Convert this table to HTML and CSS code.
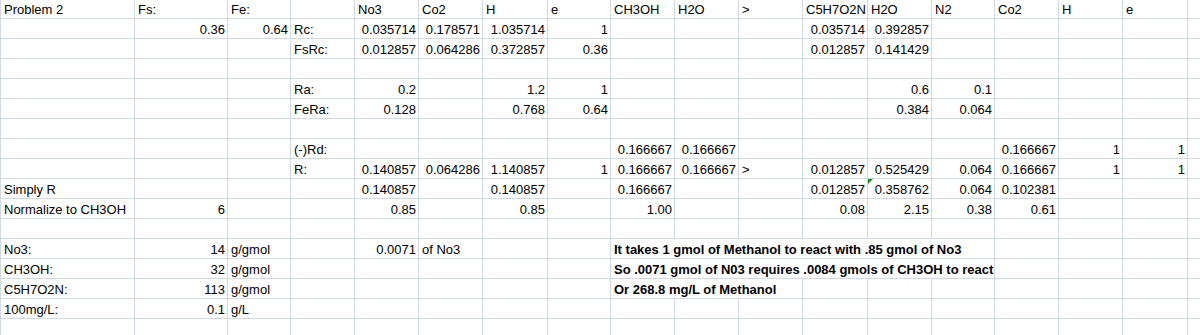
FILE: index.html
```html
<!DOCTYPE html>
<html>
<head>
<meta charset="utf-8">
<title>Problem 2</title>
<link rel="stylesheet" href="styles.css">
</head>
<body>
<div class="sheet">
  <div class="r first">
    <div>Problem 2</div><div>Fs:</div><div>Fe:</div><div></div><div>No3</div><div>Co2</div><div>H</div><div>e</div><div>CH3OH</div><div>H2O</div><div>&gt;</div><div>C5H7O2N</div><div>H2O</div><div>N2</div><div>Co2</div><div>H</div><div>e</div><div></div>
  </div>
  <div class="r">
    <div></div><div class="n">0.36</div><div class="n">0.64</div><div>Rc:</div><div class="n">0.035714</div><div class="n">0.178571</div><div class="n">1.035714</div><div class="n">1</div><div></div><div></div><div></div><div class="n">0.035714</div><div class="n">0.392857</div><div></div><div></div><div></div><div></div><div></div>
  </div>
  <div class="r">
    <div></div><div></div><div></div><div>FsRc:</div><div class="n">0.012857</div><div class="n">0.064286</div><div class="n">0.372857</div><div class="n">0.36</div><div></div><div></div><div></div><div class="n">0.012857</div><div class="n">0.141429</div><div></div><div></div><div></div><div></div><div></div>
  </div>
  <div class="r">
    <div></div><div></div><div></div><div></div><div></div><div></div><div></div><div></div><div></div><div></div><div></div><div></div><div></div><div></div><div></div><div></div><div></div><div></div>
  </div>
  <div class="r">
    <div></div><div></div><div></div><div>Ra:</div><div class="n">0.2</div><div></div><div class="n">1.2</div><div class="n">1</div><div></div><div></div><div></div><div></div><div class="n">0.6</div><div class="n">0.1</div><div></div><div></div><div></div><div></div>
  </div>
  <div class="r">
    <div></div><div></div><div></div><div>FeRa:</div><div class="n">0.128</div><div></div><div class="n">0.768</div><div class="n">0.64</div><div></div><div></div><div></div><div></div><div class="n">0.384</div><div class="n">0.064</div><div></div><div></div><div></div><div></div>
  </div>
  <div class="r">
    <div></div><div></div><div></div><div></div><div></div><div></div><div></div><div></div><div></div><div></div><div></div><div></div><div></div><div></div><div></div><div></div><div></div><div></div>
  </div>
  <div class="r">
    <div></div><div></div><div></div><div>(-)Rd:</div><div></div><div></div><div></div><div></div><div class="n">0.166667</div><div class="n">0.166667</div><div></div><div></div><div></div><div></div><div class="n">0.166667</div><div class="n">1</div><div class="n">1</div><div></div>
  </div>
  <div class="r">
    <div></div><div></div><div></div><div>R:</div><div class="n">0.140857</div><div class="n">0.064286</div><div class="n">1.140857</div><div class="n">1</div><div class="n">0.166667</div><div class="n">0.166667</div><div>&gt;</div><div class="n">0.012857</div><div class="n">0.525429</div><div class="n">0.064</div><div class="n">0.166667</div><div class="n">1</div><div class="n">1</div><div></div>
  </div>
  <div class="r">
    <div>Simply R</div><div></div><div></div><div></div><div class="n">0.140857</div><div></div><div class="n">0.140857</div><div></div><div class="n">0.166667</div><div></div><div></div><div class="n">0.012857</div><div class="n flag">0.358762</div><div class="n">0.064</div><div class="n">0.102381</div><div></div><div></div><div></div>
  </div>
  <div class="r">
    <div>Normalize to CH3OH</div><div class="n">6</div><div></div><div></div><div class="n">0.85</div><div></div><div class="n">0.85</div><div></div><div class="n">1.00</div><div></div><div></div><div class="n">0.08</div><div class="n">2.15</div><div class="n">0.38</div><div class="n">0.61</div><div></div><div></div><div></div>
  </div>
  <div class="r">
    <div></div><div></div><div></div><div></div><div></div><div></div><div></div><div></div><div></div><div></div><div></div><div></div><div></div><div></div><div></div><div></div><div></div><div></div>
  </div>
  <div class="r">
    <div>No3:</div><div class="n">14</div><div>g/gmol</div><div></div><div class="n">0.0071</div><div>of No3</div><div></div><div></div><div class="b span6">It takes 1 gmol of Methanol to react with .85 gmol of No3</div><div></div><div></div><div></div><div></div>
  </div>
  <div class="r">
    <div>CH3OH:</div><div class="n">32</div><div>g/gmol</div><div></div><div></div><div></div><div></div><div></div><div class="b span6">So .0071 gmol of N03 requires .0084 gmols of CH3OH to react</div><div></div><div></div><div></div><div></div>
  </div>
  <div class="r">
    <div>C5H7O2N:</div><div class="n">113</div><div>g/gmol</div><div></div><div></div><div></div><div></div><div></div><div class="b span3">Or 268.8 mg/L of Methanol</div><div></div><div></div><div></div><div></div><div></div><div></div><div></div>
  </div>
  <div class="r">
    <div>100mg/L:</div><div class="n">0.1</div><div>g/L</div><div></div><div></div><div></div><div></div><div></div><div></div><div></div><div></div><div></div><div></div><div></div><div></div><div></div><div></div><div></div>
  </div>
  <div class="r">
    <div></div><div></div><div></div><div></div><div></div><div></div><div></div><div></div><div></div><div></div><div></div><div></div><div></div><div></div><div></div><div></div><div></div><div></div>
  </div>
</div>
</body>
</html>
```

FILE: styles.css
```css
html, body {
  margin: 0;
  padding: 0;
  background: #ffffff;
}

body {
  font-family: "Liberation Sans", Arial, sans-serif;
  font-size: 13px;
  color: #000000;
  overflow: hidden;
}

.sheet {
  width: 1200px;
  height: 335px;
  overflow: hidden;
  border-left: 1px solid #d0d7e5;
  box-sizing: border-box;
}

.r {
  display: grid;
  grid-template-columns: 134px 93px 63px 64px 64px 64px 65px 63px 64px 64px 64px 65px 64px 63px 64px 64px 65px 64px;
  height: 20px;
}

.r.first {
  height: 19px;
}

.r > div {
  box-sizing: border-box;
  border-right: 1px solid #d0d7e5;
  border-bottom: 1px solid #d0d7e5;
  display: flex;
  align-items: flex-end;
  padding: 0 2px 1px 3px;
  line-height: 15px;
  white-space: nowrap;
  min-width: 0;
}

.r > div.n {
  justify-content: flex-end;
}

.r > div.b {
  font-weight: bold;
}

.span6 {
  grid-column: span 6;
}

.span3 {
  grid-column: span 3;
}

.flag {
  position: relative;
}

.flag::before {
  content: "";
  position: absolute;
  left: 0;
  top: 0;
  width: 0;
  height: 0;
  border-top: 5px solid #1f8a1f;
  border-right: 5px solid transparent;
}
```
